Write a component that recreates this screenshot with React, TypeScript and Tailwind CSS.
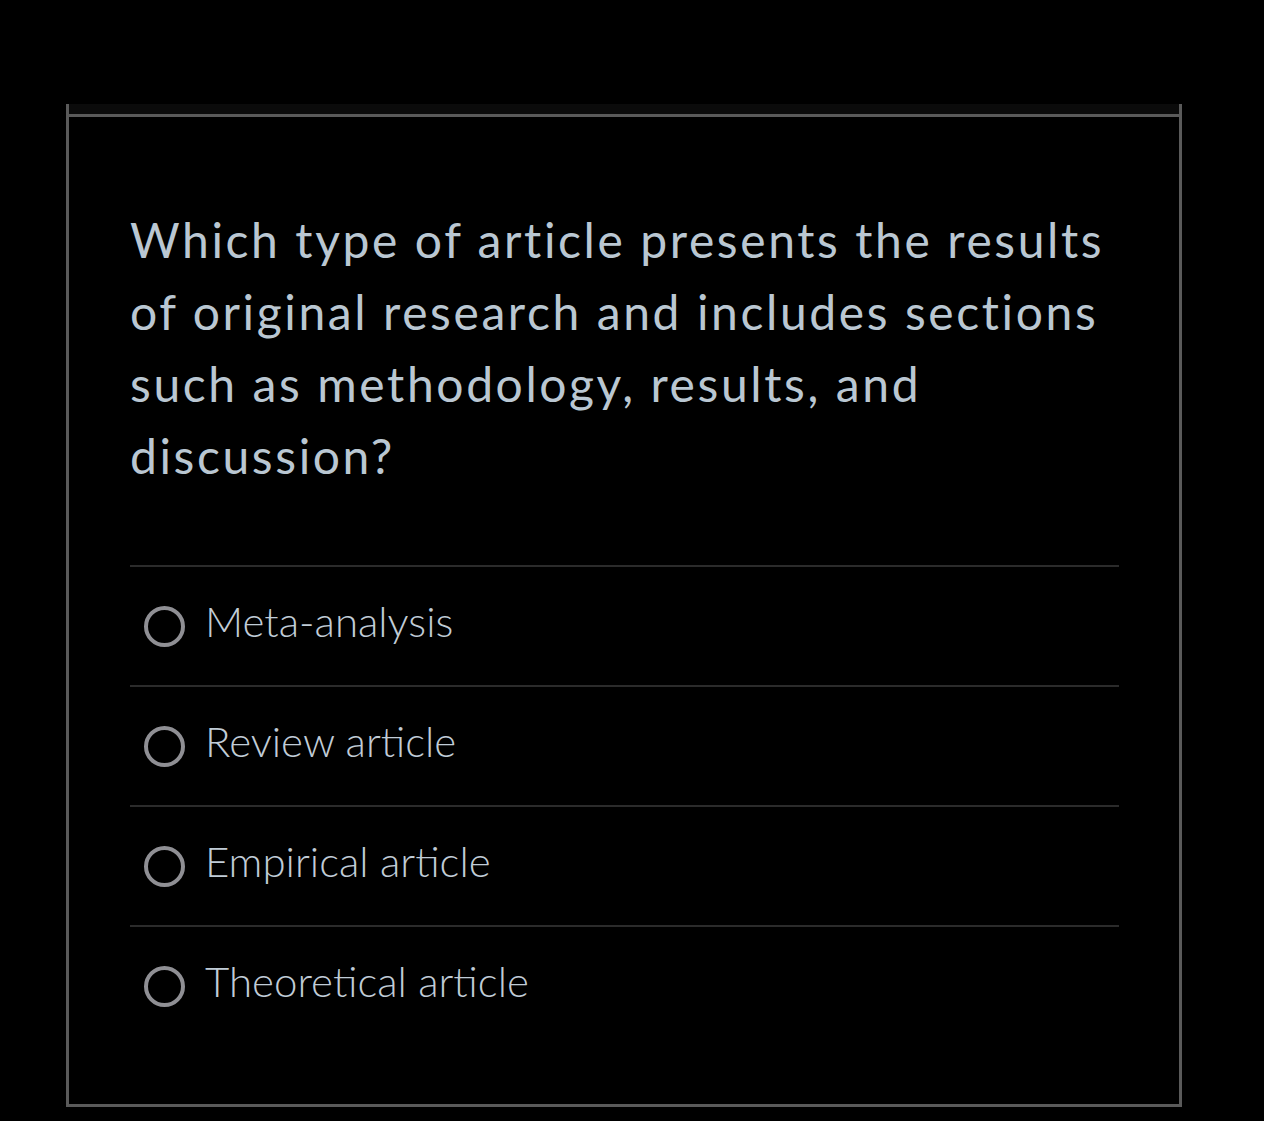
const options = ['Meta-analysis', 'Review article', 'Empirical article', 'Theoretical article'];

function RadioOption({ label }: { label: string }) {
  return (
    <label className="flex h-[120px] items-center border-t-2 border-[#2b2b2b] pl-[14px]">
      <span className="block h-[41px] w-[41px] shrink-0 rounded-full border-[4px] border-[#8f8f94]" />
      <span className="ml-[20px] -mt-[10px] text-[42px] font-light leading-[1.2] text-[#c0ccd7]">{label}</span>
    </label>
  );
}

export default function App() {
  return (
    <div className="min-h-[1121px] bg-black pt-[104px] font-['Lato',sans-serif]">
      <div className="ml-[66px] w-[1116px] border-x-[3px] border-b-[3px] border-[#5a5a5a] bg-black">
        <div className="h-[13px] border-b-[3px] border-[#5a5a5a] bg-[#0b0b0b]" />
        <div className="pl-[61px] pr-[60px] pt-[87px] pb-[59px]">
          <p className="text-[48px] leading-[72px] tracking-[2.6px] text-[#bac7d2]">
            Which type of article presents the results of original research and includes sections such as methodology, results, and discussion?
          </p>
          <div className="mt-[73px]">
            {options.map((o) => (
              <RadioOption key={o} label={o} />
            ))}
          </div>
        </div>
      </div>
    </div>
  );
}
